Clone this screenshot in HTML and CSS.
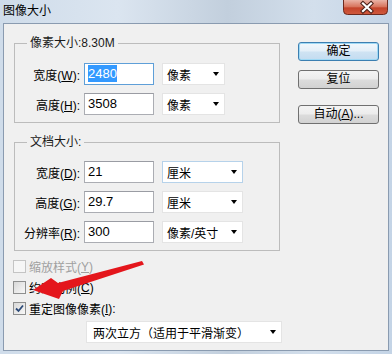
FILE: index.html
```html
<!DOCTYPE html>
<html>
<head>
<meta charset="utf-8">
<link rel="stylesheet" href="styles.css">
</head>
<body>
<div class="window">
  <div class="titlebar">
    <span class="title">图像大小</span>
    <div class="close">
      <svg width="45" height="15" viewBox="0 0 45 15">
        <defs>
          <linearGradient id="cg" x1="0" y1="0" x2="0" y2="1">
            <stop offset="0" stop-color="#eab3a6"/>
            <stop offset="0.45" stop-color="#d8765f"/>
            <stop offset="0.55" stop-color="#c4442b"/>
            <stop offset="1" stop-color="#d05a3e"/>
          </linearGradient>
        </defs>
        <path d="M0.5 0 V10.5 Q0.5 14.5 4.5 14.5 H40.5 Q44.5 14.5 44.5 10.5 V0" fill="url(#cg)" stroke="#6d2a1f"/>
        <path d="M20 3.5 L28 11 M28 3.5 L20 11" stroke="#4a1f17" stroke-width="4.2" stroke-linecap="square"/>
        <path d="M20 3.5 L28 11 M28 3.5 L20 11" stroke="#ffffff" stroke-width="2.2" stroke-linecap="square"/>
      </svg>
    </div>
  </div>
  <div class="client">
    <div class="top">
      <div class="groups">
        <fieldset class="group g1">
          <legend>像素大小:8.30M</legend>
          <div class="row">
            <span class="lbl">宽度(<u>W</u>):</span>
            <div class="field focus"><span class="sel">2480</span></div>
            <div class="combo c1">像素<i class="tri"></i></div>
          </div>
          <div class="row">
            <span class="lbl">高度(<u>H</u>):</span>
            <div class="field">3508</div>
            <div class="combo c1">像素<i class="tri"></i></div>
          </div>
        </fieldset>
        <fieldset class="group g2">
          <legend>文档大小:</legend>
          <div class="row">
            <span class="lbl">宽度(<u>D</u>):</span>
            <div class="field">21</div>
            <div class="combo c2 hover">厘米<i class="tri"></i></div>
          </div>
          <div class="row">
            <span class="lbl">高度(<u>G</u>):</span>
            <div class="field">29.7</div>
            <div class="combo c2">厘米<i class="tri"></i></div>
          </div>
          <div class="row">
            <span class="lbl">分辨率(<u>R</u>):</span>
            <div class="field">300</div>
            <div class="combo c2">像素/英寸<i class="tri"></i></div>
          </div>
        </fieldset>
      </div>
      <div class="buttons">
        <div class="btn default">确定</div>
        <div class="btn reset">复位</div>
        <div class="btn auto">自动(<u>A</u>)...</div>
      </div>
    </div>
    <div class="checks">
      <div class="check disabled"><span class="box"></span>缩放样式(<u>Y</u>)</div>
      <div class="check"><span class="box"></span>约束比例(<u>C</u>)</div>
      <div class="check"><span class="box"><svg width="11" height="11" viewBox="0 0 11 11"><path d="M2 5.5 L4.5 8 L9 2.5" fill="none" stroke="#2c4a78" stroke-width="1.8"/></svg></span>重定图像像素(<u>I</u>):</div>
    </div>
    <div class="combo resample">两次立方（适用于平滑渐变）<i class="tri"></i></div>
  </div>
  <svg class="arrow" width="392" height="354" viewBox="0 0 392 354">
    <polygon points="142,261 144,264.5 63,291 59,299 33,290 51,278 58,283" fill="#e4161c"/>
  </svg>
</div>
</body>
</html>
```

FILE: styles.css
```css
html, body {
  margin: 0;
  padding: 0;
}

body {
  width: 392px;
  height: 354px;
  overflow: hidden;
  font-family: "Liberation Sans", "Noto Sans CJK SC", sans-serif;
  font-size: 12px;
  color: #000;
}

.window {
  position: relative;
  width: 392px;
  height: 354px;
  background: linear-gradient(90deg, #cfdcea 0%, #dbe5f0 30%, #c2cfdd 58%, #d3dfec 80%, #c4d4e6 100%);
  display: flex;
  flex-direction: column;
}

.titlebar {
  height: 23px;
  display: flex;
  justify-content: space-between;
  align-items: flex-start;
}

.title {
  padding: 4px 0 0 3px;
  line-height: 14px;
  font-size: 12px;
  color: #000;
}

.close {
  margin-right: 4px;
  width: 45px;
  height: 15px;
}

.close svg {
  display: block;
}

.client {
  margin: 0 3px;
  height: 326px;
  border: 1px solid #8a9bb0;
  background: #f0f0f0;
}

.top {
  display: flex;
  padding-left: 10px;
}

.groups {
  width: 266px;
}

.group {
  margin: 12px 0 0 0;
  padding: 13px 0 7px 0;
  border: 1px solid #bcbcbc;
  min-width: 0;
}

.g2 {
  padding-top: 12px;
}

.group legend {
  margin-left: 12px;
  padding: 0 3px;
  line-height: 14px;
  color: #1a1a1a;
}

.row {
  display: flex;
  align-items: center;
  height: 22px;
}

.row + .row {
  margin-top: 8px;
}

.lbl {
  width: 65px;
  margin-right: 4px;
  text-align: right;
  white-space: nowrap;
}

.field {
  width: 70px;
  height: 22px;
  box-sizing: border-box;
  border: 1px solid #abadb3;
  border-top-color: #9a9ca3;
  background: #fff;
  padding-left: 3px;
  line-height: 20px;
  font-size: 13px;
}

.field.focus {
  border-color: #5e9fd8;
}

.sel {
  background: #3399ff;
  color: #fff;
  padding: 1px 0 1px 0;
}

.combo {
  margin-left: 8px;
  height: 22px;
  box-sizing: border-box;
  border: 1px solid #e4e4e4;
  background: #fff;
  display: flex;
  align-items: center;
  padding: 0 5px 0 4px;
  white-space: nowrap;
}

.combo.hover {
  border-color: #b6d2ea;
}

.c1 {
  width: 63px;
}

.c2 {
  width: 81px;
}

.tri {
  margin-left: auto;
  width: 0;
  height: 0;
  border-left: 3.5px solid transparent;
  border-right: 3.5px solid transparent;
  border-top: 4px solid #000;
}

.buttons {
  margin-left: 18px;
  margin-top: 18px;
  width: 81px;
  display: flex;
  flex-direction: column;
}

.btn {
  height: 19px;
  box-sizing: border-box;
  border: 1px solid #707070;
  border-radius: 3px;
  background: linear-gradient(#f4f4f4 0%, #ececec 48%, #dcdcdc 52%, #d2d2d2 100%);
  text-align: center;
  line-height: 17px;
}

.btn.default {
  border-color: #3c7fb1;
  box-shadow: inset 0 0 0 1px #9fd9f5;
  background: linear-gradient(#f2f8fc 0%, #e3eff8 48%, #cfe3f3 52%, #c3dcf0 100%);
}

.btn.reset {
  margin-top: 9px;
}

.btn.auto {
  margin-top: 16px;
}

.checks {
  margin-top: 5px;
  padding-left: 9px;
}

.check {
  height: 21px;
  display: flex;
  align-items: center;
}

.box {
  width: 13px;
  height: 13px;
  box-sizing: border-box;
  border: 1px solid #8e8f8f;
  background: linear-gradient(135deg, #d8d8d8, #f8f8f8);
  margin-right: 3px;
  display: flex;
}

.box svg {
  display: block;
}

.check.disabled {
  color: #a0a0a0;
}

.check.disabled .box {
  border-color: #c4c4c4;
  background: #f6f6f6;
}

.combo.resample {
  margin: 2px 0 0 82px;
  width: 196px;
  padding-left: 6px;
}

.arrow {
  position: absolute;
  left: 0;
  top: 0;
  pointer-events: none;
}
```
